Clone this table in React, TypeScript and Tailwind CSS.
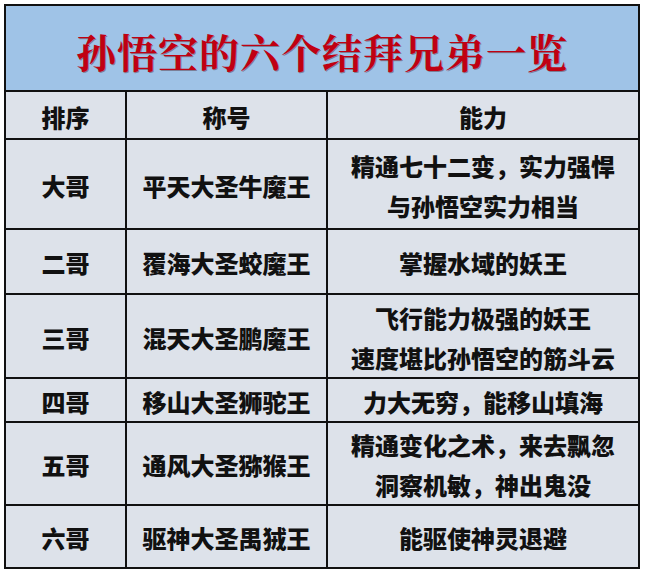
import { Fragment } from "react";

const rows = [
  { rank: "大哥", name: "平天大圣牛魔王", ability: ["精通七十二变，实力强悍", "与孙悟空实力相当"], h: "h-[88px]" },
  { rank: "二哥", name: "覆海大圣蛟魔王", ability: ["掌握水域的妖王"], h: "h-[63px]" },
  { rank: "三哥", name: "混天大圣鹏魔王", ability: ["飞行能力极强的妖王", "速度堪比孙悟空的筋斗云"], h: "h-[82px]" },
  { rank: "四哥", name: "移山大圣狮驼王", ability: ["力大无穷，能移山填海"], h: "h-[42px]" },
  { rank: "五哥", name: "通风大圣猕猴王", ability: ["精通变化之术，来去飘忽", "洞察机敏，神出鬼没"], h: "h-[81px]" },
  { rank: "六哥", name: "驱神大圣禺狨王", ability: ["能驱使神灵退避"], h: "h-[61px]" },
];

const cell = "flex flex-col items-center justify-center bg-[#dde2ea] pt-[3px] text-center";

export default function App() {
  return (
    <div className="h-[574px] w-[646px] bg-white pl-[4px] pt-[4px] text-[#111] [font-family:'Noto_Sans_CJK_SC',sans-serif]">
      <div className="flex w-[636px] flex-col gap-[2px] bg-[#111] p-[2px]">
        <div className="flex h-[84px] items-center justify-center bg-[#9fc3e7] pt-[5px]">
          <h1 className="text-[40px] font-bold leading-none tracking-[1px] text-[#c00012] [font-family:'Noto_Serif_CJK_SC','Noto_Sans_CJK_SC',serif] [text-shadow:1px_1px_0_rgba(60,0,0,0.35)]">
            孙悟空的六个结拜兄弟一览
          </h1>
        </div>
        <div className="grid grid-cols-[119px_199px_310px] gap-[2px] text-[24px] font-black leading-[40px]">
          <div className={`${cell} h-[46px] bg-[#d8dde4]`}>排序</div>
          <div className={`${cell} h-[46px] bg-[#d8dde4]`}>称号</div>
          <div className={`${cell} h-[46px] bg-[#d8dde4]`}>能力</div>
          {rows.map((r) => (
            <Fragment key={r.rank}>
              <div className={`${cell} ${r.h}`}>{r.rank}</div>
              <div className={`${cell} ${r.h}`}>{r.name}</div>
              <div className={`${cell} ${r.h}`}>
                {r.ability.map((line) => (
                  <span key={line}>{line}</span>
                ))}
              </div>
            </Fragment>
          ))}
        </div>
      </div>
    </div>
  );
}
